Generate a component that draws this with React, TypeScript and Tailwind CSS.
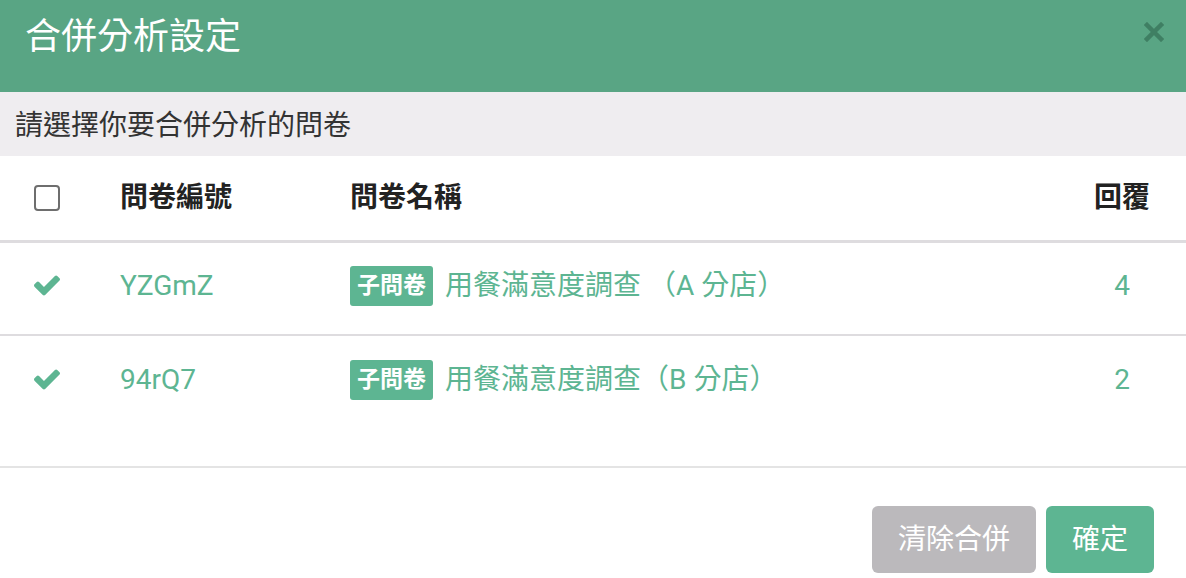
import React from "react";

const Check = () => (
  <svg width="26" height="21" viewBox="121 334 1550 1188" className="block">
    <path
      fill="#5db592"
      d="M1671 566q0 40-28 68l-724 724-136 136q-28 28-68 28t-68-28l-136-136-362-362q-28-28-28-68t28-68l136-136q28-28 68-28t68 28l294 295 656-657q28-28 68-28t68 28l136 136q28 28 28 68z"
    />
  </svg>
);

const rows = [
  { code: "YZGmZ", name: "用餐滿意度調查 （A 分店）", n: "4" },
  { code: "94rQ7", name: "用餐滿意度調查（B 分店）", n: "2" },
];

export default function App() {
  return (
    <div
      className="w-[1186px] h-[578px] overflow-hidden bg-white"
      style={{ fontFamily: "Roboto, 'Noto Sans CJK TC', sans-serif" }}
    >
      <div className="h-[92px] bg-[#59a584] flex items-start justify-between pl-[25px] pr-[22px]">
        <div className="text-[36px] leading-none text-white mt-[19px]">合併分析設定</div>
        <svg width="20" height="20" viewBox="0 0 20 20" className="mt-[22px]">
          <path d="M3 3 L17 17 M17 3 L3 17" stroke="#3f7f63" strokeWidth="4.5" strokeLinecap="square" />
        </svg>
      </div>
      <div className="h-[64px] bg-[#efedf0] flex items-center pl-[15px] pt-[3px] text-[28px] text-[#333] leading-none">
        請選擇你要合併分析的問卷
      </div>
      <div className="grid grid-cols-[120px_230px_1fr_116px] pr-[6px] h-[87px] items-center border-b-[3px] border-[#dedcdf] text-[28px] font-bold text-[#222] leading-none">
        <div className="pl-[34px]">
          <div className="w-[26px] h-[26px] border-2 border-[#6e6e6e] rounded-[4px]" />
        </div>
        <div>問卷編號</div>
        <div>問卷名稱</div>
        <div className="text-center">回覆</div>
      </div>
      <div className="pb-[37px] border-b-2 border-[#e4e4e4]">
        {rows.map((r, i) => (
          <div
            key={r.code}
            className={`grid grid-cols-[120px_230px_1fr_116px] pr-[6px] h-[93px] pb-[6px] items-center text-[28px] text-[#5db592] leading-none ${i === 0 ? "border-b-2 border-[#dedcdf]" : ""}`}
          >
            <div className="pl-[34px]">
              <Check />
            </div>
            <div>{r.code}</div>
            <div className="flex items-center">
              <span className="bg-[#5db592] text-white font-bold text-[23px] leading-none rounded-[3px] h-[40px] w-[83px] flex items-center justify-center mr-[12px]">
                子問卷
              </span>
              <span>{r.name}</span>
            </div>
            <div className="text-center">{r.n}</div>
          </div>
        ))}
      </div>
      <div className="flex justify-end gap-[10px] pt-[38px] pr-[32px]">
        <button className="w-[164px] h-[67px] rounded-[6px] bg-[#bbb9bc] text-white text-[28px] leading-none">清除合併</button>
        <button className="w-[108px] h-[67px] rounded-[6px] bg-[#5db592] text-white text-[28px] leading-none">確定</button>
      </div>
    </div>
  );
}
